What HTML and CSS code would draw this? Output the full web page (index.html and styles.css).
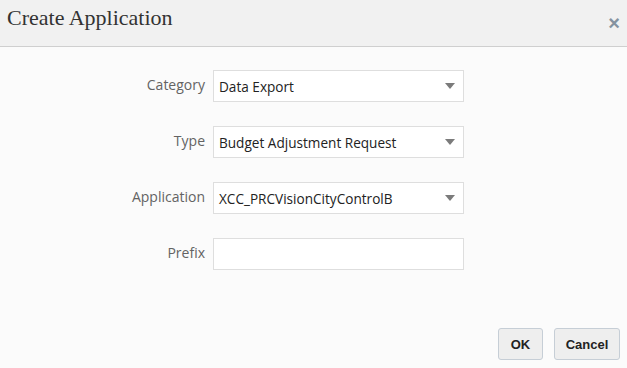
FILE: index.html
```html
<!DOCTYPE html>
<html lang="en">
<head>
  <meta charset="UTF-8">
  <title>Create Application</title>
  <link rel="stylesheet" href="styles.css">
</head>
<body>
  <div class="dialog">
    <div class="dialog-header">
      <h1>Create Application</h1>
      <span class="close">&times;</span>
    </div>

    <div class="dialog-body">
      <div class="field">
        <label>Category</label>
        <div class="select">
          <span>Data Export</span>
          <span class="arrow"></span>
        </div>
      </div>
      <div class="field">
        <label>Type</label>
        <div class="select">
          <span>Budget Adjustment Request</span>
          <span class="arrow"></span>
        </div>
      </div>
      <div class="field">
        <label>Application</label>
        <div class="select">
          <span>XCC_PRCVisionCityControlB</span>
          <span class="arrow"></span>
        </div>
      </div>
      <div class="field">
        <label>Prefix</label>
        <div class="select"></div>
      </div>
    </div>

    <div class="dialog-footer">
      <button class="ok">OK</button>
      <button class="cancel">Cancel</button>
    </div>
  </div>
</body>
</html>
```

FILE: styles.css
```css
body {
  margin: 0;
  padding: 0;
  background: #fbfbfb;
  font-family: "Open Sans", "Liberation Sans", sans-serif;
}

.dialog {
  width: 627px;
  height: 368px;
  display: flex;
  flex-direction: column;
}

.dialog-header {
  height: 46px;
  background: #f1f1f1;
  border-bottom: 1px solid #cfcfcf;
  display: flex;
  align-items: flex-start;
  justify-content: space-between;
  padding: 0 7px 0 7px;
}

.dialog-header h1 {
  margin: 5px 0 0;
  font-family: "Liberation Serif", serif;
  font-weight: normal;
  font-size: 22px;
  color: #333;
}

.close {
  margin-top: 12px;
  font-family: "Liberation Sans", sans-serif;
  font-size: 20px;
  font-weight: bold;
  color: #8593a0;
}

.dialog-body {
  flex: 1;
  padding-top: 23px;
  display: flex;
  flex-direction: column;
  gap: 24px;
}

.field {
  display: flex;
  align-items: center;
}

.field label {
  width: 213px;
  text-align: right;
  padding-right: 8px;
  padding-bottom: 3px;
  box-sizing: border-box;
  font-size: 14px;
  color: #636363;
}

.select {
  width: 251px;
  height: 32px;
  box-sizing: border-box;
  border: 1px solid #dedede;
  background: #fff;
  display: flex;
  align-items: center;
  justify-content: space-between;
  padding: 0 8px 0 5px;
  font-size: 13.6px;
  color: #222;
}

.arrow {
  width: 0;
  height: 0;
  border-left: 5px solid transparent;
  border-right: 5px solid transparent;
  border-top: 6px solid #7b7b7b;
}

.dialog-footer {
  display: flex;
  justify-content: flex-end;
  gap: 11px;
  padding: 0 7px 8px 0;
}

.dialog-footer button {
  height: 32px;
  padding: 0;
  background: #eeeeee;
  border: 1px solid #c6ced6;
  border-radius: 3px;
  font-family: "Liberation Sans", sans-serif;
  font-weight: bold;
  font-size: 13px;
  color: #222;
}

.dialog-footer .ok {
  width: 45px;
}

.dialog-footer .cancel {
  width: 66px;
}
```
